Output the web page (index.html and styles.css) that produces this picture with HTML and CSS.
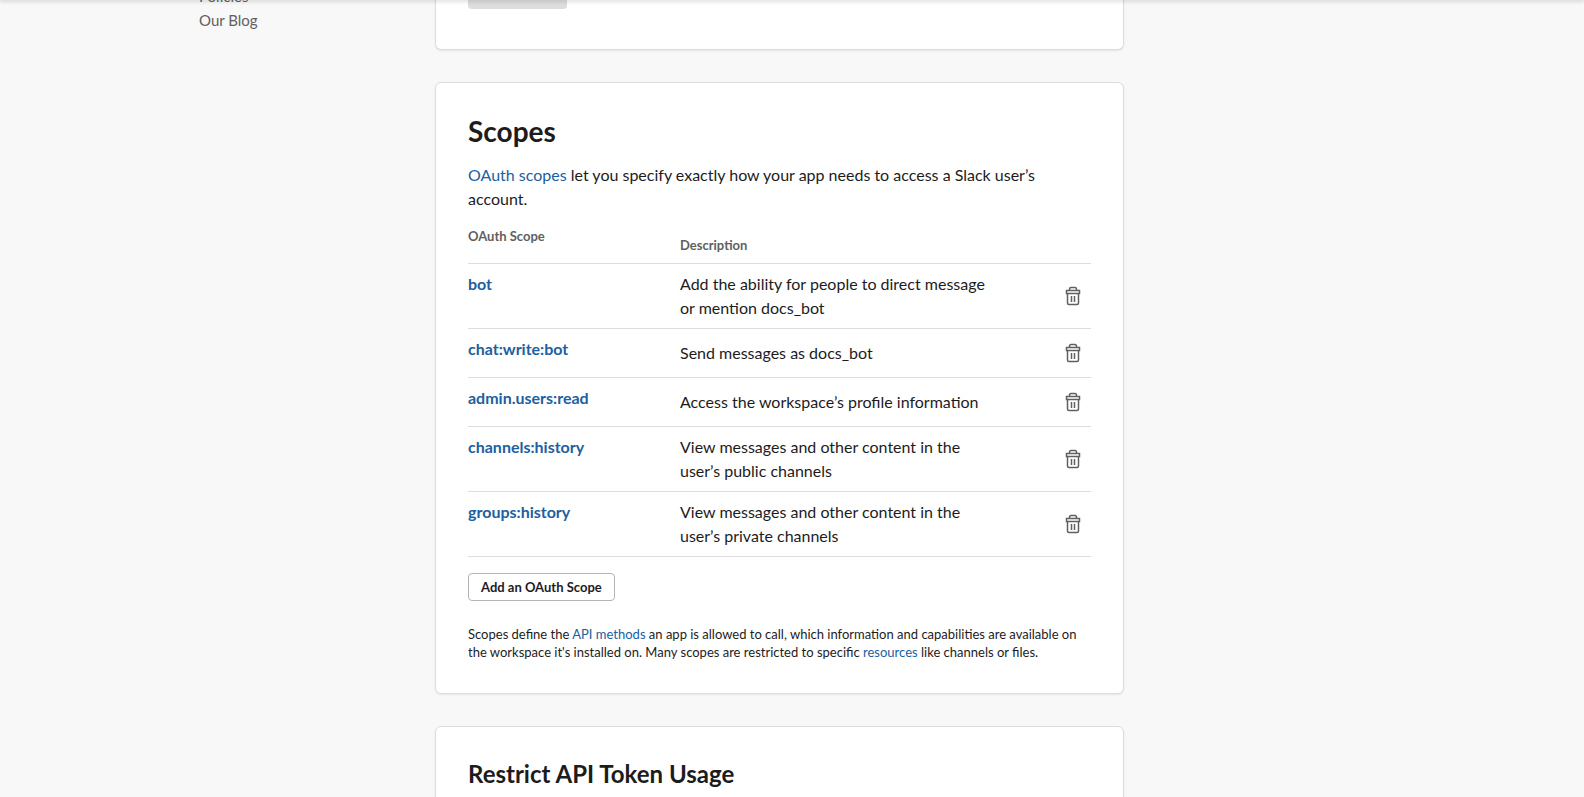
FILE: index.html
```html
<!DOCTYPE html>
<html lang="en">
<head>
<meta charset="utf-8">
<title>OAuth &amp; Permissions</title>
<link rel="stylesheet" href="styles.css">
</head>
<body>
<svg class="sprite" aria-hidden="true">
  <symbol id="trash" viewBox="0 0 16 20">
    <path d="M4.500 4.500V3.500Q4.500 1.500 6 1.500H10Q11.500 1.500 11.500 3.500V4.500M1.500 4.500H14.500V7.500H1.500ZM2.500 7.500V17Q2.500 18.500 4 18.500H12Q13.500 18.500 13.500 17V7.500M6.500 10V16M9.500 10V16" fill="none" stroke="currentColor" stroke-width="1.500"/>
  </symbol>
</svg>
<header class="topbar"></header>
<div class="layout">
  <nav class="sidebar">
    <a href="#">Policies</a>
    <a href="#">Our Blog</a>
  </nav>
  <main class="content">
    <section class="card card-prev">
      <button class="btn-disabled" type="button" disabled aria-label="Save URLs"></button>
    </section>

    <section class="card">
      <h2 class="title">Scopes</h2>
      <p class="intro"><a href="#">OAuth scopes</a> let you specify exactly how your app needs to access a Slack user’s account.</p>
      <table class="scopes">
        <thead>
          <tr><th class="name" scope="col">OAuth Scope</th><th class="desc" scope="col">Description</th><td class="action"></td></tr>
        </thead>
        <tbody>
          <tr><td class="name"><a href="#">bot</a></td><td class="desc">Add the ability for people to direct message or mention docs_bot</td><td class="action"><button class="trash" type="button" aria-label="Remove bot"><svg><use href="#trash"/></svg></button></td></tr>
          <tr><td class="name"><a href="#">chat:write:bot</a></td><td class="desc">Send messages as docs_bot</td><td class="action"><button class="trash" type="button" aria-label="Remove chat:write:bot"><svg><use href="#trash"/></svg></button></td></tr>
          <tr><td class="name"><a href="#">admin.users:read</a></td><td class="desc">Access the workspace’s profile information</td><td class="action"><button class="trash" type="button" aria-label="Remove admin.users:read"><svg><use href="#trash"/></svg></button></td></tr>
          <tr><td class="name"><a href="#">channels:history</a></td><td class="desc">View messages and other content in the user’s public channels</td><td class="action"><button class="trash" type="button" aria-label="Remove channels:history"><svg><use href="#trash"/></svg></button></td></tr>
          <tr><td class="name"><a href="#">groups:history</a></td><td class="desc">View messages and other content in the user’s private channels</td><td class="action"><button class="trash" type="button" aria-label="Remove groups:history"><svg><use href="#trash"/></svg></button></td></tr>
        </tbody>
      </table>
      <button class="btn" type="button">Add an OAuth Scope</button>
      <p class="note">Scopes define the <a href="#">API methods</a> an app is allowed to call, which information and capabilities are available on the workspace it's installed on. Many scopes are restricted to specific <a href="#">resources</a> like channels or files.</p>
    </section>

    <section class="card">
      <h3 class="subtitle">Restrict API Token Usage</h3>
    </section>
  </main>
</div>
</body>
</html>
```
FILE: styles.css
```css
* { box-sizing: border-box; }

html, body { height: 100%; }

body {
  margin: 0;
  overflow: hidden;
  background: #f8f8f8;
  color: #1d1c1d;
  font: 16px/24px Lato, "Liberation Sans", sans-serif;
}

a { color: #2060a0; text-decoration: none; }

.sprite { position: absolute; width: 0; height: 0; }

/* only the shadow of the fixed bar reaches into the scrolled page */
.topbar {
  position: fixed;
  inset: 0 0 auto;
  z-index: 1;
  box-shadow: 0 0 4px 1px rgba(0, 0, 0, .25);
}

.layout {
  display: grid;
  grid-template-columns: 236px minmax(0, 689px);
  max-width: 1186px;
  margin: -16px auto 0;
}

.sidebar { display: flex; flex-direction: column; }
.sidebar a { color: #616061; font-size: 15px; }

.content { display: flex; flex-direction: column; gap: 32px; }

.card {
  padding: 32px;
  background: #fff;
  border: 1px solid #ddd;
  border-radius: 6px;
  box-shadow: 0 1px 2px rgba(0, 0, 0, .08);
}

.card-prev { padding-top: 0; padding-bottom: 40px; border-top: 0; }

.btn-disabled {
  display: block;
  width: 99px;
  height: 25px;
  border: 0;
  border-radius: 4px;
  background: #ddd;
}

.title { margin: 0 0 16px; font-size: 28px; line-height: 32px; font-weight: 700; }
.subtitle { margin: 0; font-size: 24px; line-height: 30px; font-weight: 700; }
.intro { margin: 0 0 8px; }

.scopes { width: 100%; border-collapse: collapse; table-layout: fixed; }
.scopes th, .scopes td {
  padding: 8px 0;
  border-bottom: 1px solid #ddd;
  text-align: left;
  vertical-align: middle;
}
.scopes th { height: 44px; font-size: 13px; line-height: 18px; color: #616061; }
.scopes .name { width: 212px; vertical-align: top; font-weight: 700; }
.scopes .desc { padding-right: 60px; }
.scopes th.desc { vertical-align: bottom; line-height: 20px; }
.scopes .action { width: 36px; padding: 8px 0; }
.scopes thead .action { padding: 0; }

.trash {
  display: block;
  height: 32px;
  padding: 0 0 0 10px;
  border: 0;
  background: none;
  color: #616061;
  cursor: pointer;
}
.trash svg { display: block; width: 16px; height: 20px; }

.btn {
  display: block;
  margin: 16px 0 24px;
  padding: 0 12px;
  height: 28px;
  border: 1px solid #b4b4b4;
  border-radius: 4px;
  background: #fff;
  color: #1d1c1d;
  font: 700 13px/18px Lato, "Liberation Sans", sans-serif;
}

.note { margin: 0; font-size: 13px; line-height: 18px; }
```
